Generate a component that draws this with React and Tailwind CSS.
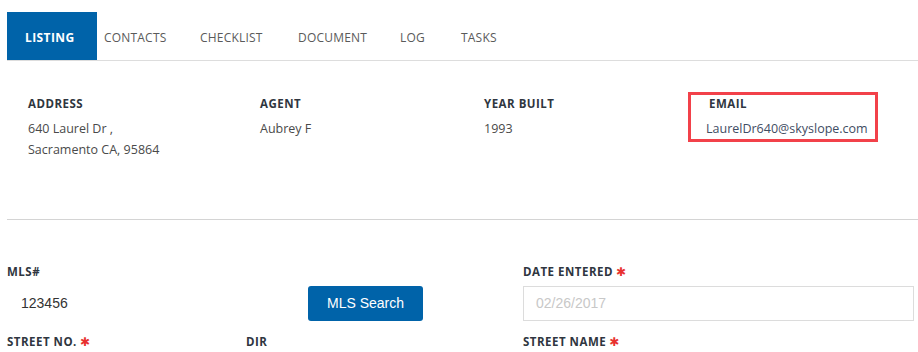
import React from "react";

const Star = () => (
  <span className="ml-[3px] text-[#e8312f] text-[12px] leading-none align-[0px]" style={{ fontFamily: '"DejaVu Sans", sans-serif' }}>✱</span>
);

const Label = ({ children, req }) => (
  <div className="text-[11.5px] leading-[15px] font-bold text-[#2f3640] tracking-[0.5px] whitespace-nowrap" style={{ fontFamily: '"Open Sans", sans-serif' }}>
    {children}
    {req && <Star />}
  </div>
);

export default function App() {
  const tabs = [
    { t: "CONTACTS", w: "w-[96px]" },
    { t: "CHECKLIST", w: "w-[98px]" },
    { t: "DOCUMENT", w: "w-[102px]" },
    { t: "LOG", w: "w-[61px]" },
    { t: "TASKS", w: "w-[80px]" },
  ];
  return (
    <div className="w-[918px] h-[352px] bg-white overflow-hidden" style={{ fontFamily: '"Open Sans", sans-serif' }}>
      {/* Tabs */}
      <div className="pt-[12px] pl-[7px]">
        <div className="flex h-[49px] border-b border-[#dddddd]">
          <div className="w-[90px] bg-[#0063a9] flex items-center pt-[3px] pl-[18px] text-white text-[12px] font-bold tracking-[0.4px]">
            LISTING
          </div>
          <div className="w-[7px]" />
          {tabs.map((x) => (
            <div key={x.t} className={`${x.w} flex items-center pt-[3px] text-[12px] text-[#5a5a5a] tracking-[0.2px]`}>
              {x.t}
            </div>
          ))}
        </div>
      </div>

      {/* Info */}
      <div className="pt-[35px] pl-[28px] grid grid-cols-[232px_224px_204px_190px] items-start">
        <div>
          <Label>ADDRESS</Label>
          <div className="mt-[7px] text-[12.5px] leading-[21px] text-[#4a4a4a]">
            <div>640 Laurel Dr ,</div>
            <div>Sacramento CA, 95864</div>
          </div>
        </div>
        <div>
          <Label>AGENT</Label>
          <div className="mt-[7px] text-[12.5px] leading-[21px] text-[#4a4a4a]">Aubrey F</div>
        </div>
        <div>
          <Label>YEAR BUILT</Label>
          <div className="mt-[7px] text-[12.5px] leading-[21px] text-[#4a4a4a]">1993</div>
        </div>
        <div className="-mt-[4px] h-[50px] border-[3px] border-[#f2414a] pl-[15px] pt-[1px]">
          <div className="pl-[3px]">
            <Label>EMAIL</Label>
          </div>
          <div className="mt-[7px] text-[12.5px] leading-[21px] text-[#3f4d63] whitespace-nowrap">LaurelDr640@skyslope.com</div>
        </div>
      </div>

      {/* Divider */}
      <div className="ml-[7px] mt-[59px] border-t border-[#d4d4d4]" />

      {/* Form */}
      <div className="pl-[7px] pt-[44px]">
        <div className="grid grid-cols-[516px_391px]">
          <div>
            <Label>MLS#</Label>
            <div className="mt-[7px] flex items-center h-[35px]">
              <div className="w-[301px] h-[35px] flex items-center pl-[14px] text-[14px] text-[#333]" style={{ fontFamily: '"Liberation Sans", Arial, sans-serif' }}>
                123456
              </div>
              <button className="w-[115px] h-[35px] bg-[#0063a9] rounded-[3px] text-white text-[14px]" style={{ fontFamily: '"Liberation Sans", Arial, sans-serif' }}>
                MLS Search
              </button>
            </div>
          </div>
          <div>
            <Label req>DATE ENTERED</Label>
            <div className="mt-[7px] h-[35px] border border-[#dcdcdc] flex items-center pl-[12px] text-[14px] text-[#c8c8c8]" style={{ fontFamily: '"Liberation Sans", Arial, sans-serif' }}>
              02/26/2017
            </div>
          </div>
        </div>
        <div className="mt-[13px] grid grid-cols-[239px_277px_1fr]">
          <Label req>STREET NO.</Label>
          <Label>DIR</Label>
          <Label req>STREET NAME</Label>
        </div>
      </div>
    </div>
  );
}
